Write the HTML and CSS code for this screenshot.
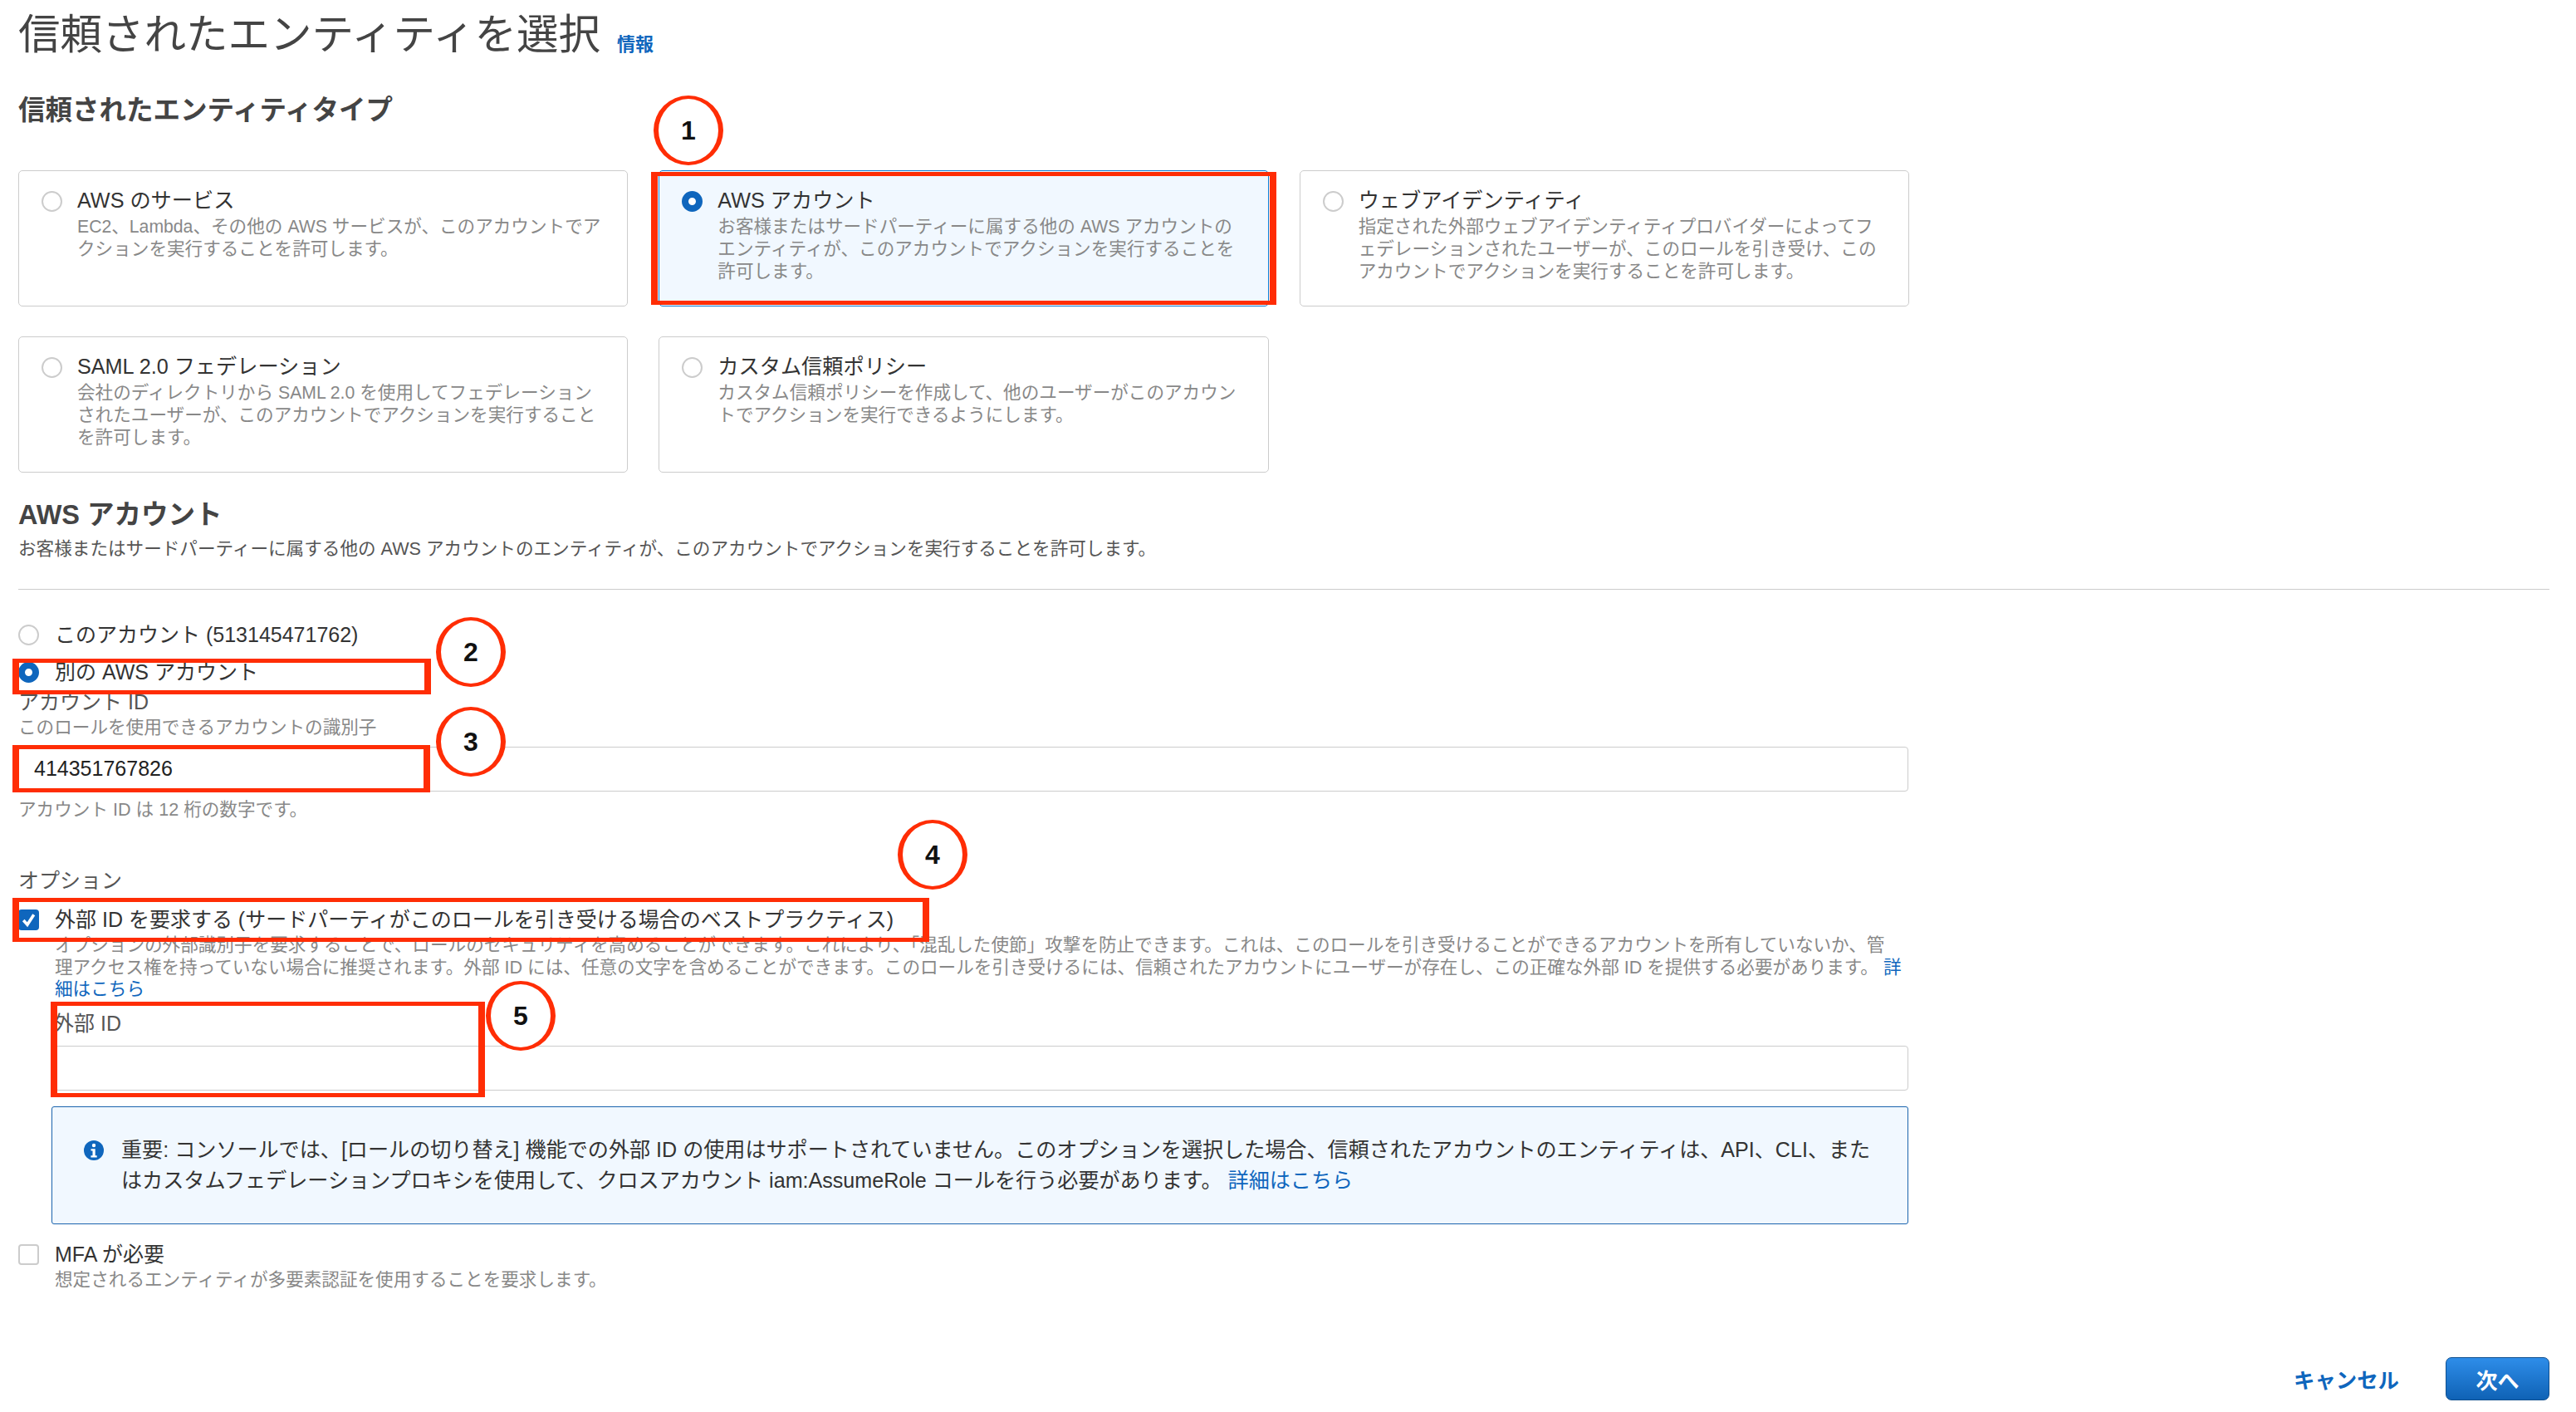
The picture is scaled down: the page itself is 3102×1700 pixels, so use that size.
FILE: index.html
```html
<!DOCTYPE html>
<html lang="ja">
<head>
<meta charset="utf-8">
<title>信頼されたエンティティを選択</title>
<link rel="stylesheet" href="styles.css">
</head>
<body>
<main class="page">
  <header class="title-row">
    <h1 class="title">信頼されたエンティティを選択</h1>
    <a class="info-link">情報</a>
  </header>
  <h2 class="section-title">信頼されたエンティティタイプ</h2>
  <div class="cards">
    <div class="card">
      <span class="radio"></span>
      <div class="card-body"><div class="card-title">AWS のサービス</div><p class="card-desc"><span class="latin">EC2</span>、<span class="latin">Lambda</span>、その他の <span class="latin">AWS</span> サービスが、このアカウントでア<br>クションを実行することを許可します。</p></div>
    </div>
    <div class="card card-on">
      <span class="radio radio-on"></span>
      <div class="card-body"><div class="card-title">AWS アカウント</div><p class="card-desc">お客様またはサードパーティーに属する他の <span class="latin">AWS</span> アカウントの<br>エンティティが、このアカウントでアクションを実行することを<br>許可します。</p></div>
    </div>
    <div class="card">
      <span class="radio"></span>
      <div class="card-body"><div class="card-title">ウェブアイデンティティ</div><p class="card-desc">指定された外部ウェブアイデンティティプロバイダーによってフ<br>ェデレーションされたユーザーが、このロールを引き受け、この<br>アカウントでアクションを実行することを許可します。</p></div>
    </div>
    <div class="card">
      <span class="radio"></span>
      <div class="card-body"><div class="card-title">SAML 2.0 フェデレーション</div><p class="card-desc">会社のディレクトリから <span class="latin">SAML 2.0</span> を使用してフェデレーション<br>されたユーザーが、このアカウントでアクションを実行すること<br>を許可します。</p></div>
    </div>
    <div class="card">
      <span class="radio"></span>
      <div class="card-body"><div class="card-title">カスタム信頼ポリシー</div><p class="card-desc">カスタム信頼ポリシーを作成して、他のユーザーがこのアカウン<br>トでアクションを実行できるようにします。</p></div>
    </div>
  </div>

  <h2 class="section-title account-title">AWS アカウント</h2>
  <p class="account-desc">お客様またはサードパーティーに属する他の AWS アカウントのエンティティが、このアカウントでアクションを実行することを許可します。</p>
  <hr class="rule">

  <div class="choice choice-first"><span class="radio"></span><span class="choice-label">このアカウント (513145471762)</span></div>
  <div class="choice choice-second"><span class="radio radio-on"></span><span class="choice-label">別の AWS アカウント</span></div>

  <div class="label label-account">アカウント ID</div>
  <div class="hint hint-account">このロールを使用できるアカウントの識別子</div>
  <div class="input input-account">414351767826</div>
  <div class="hint hint-help">アカウント ID は 12 桁の数字です。</div>

  <div class="label label-options">オプション</div>
  <div class="choice choice-check">
    <span class="check check-on"><svg viewBox="0 0 24 24" width="25" height="25"><path d="M6 12.5l4.5 5L18 6" fill="none" stroke="#fff" stroke-width="3.4"/></svg></span>
    <span class="choice-label">外部 ID を要求する (サードパーティがこのロールを引き受ける場合のベストプラクティス)</span>
  </div>
  <div class="indent">
    <p class="option-desc">オプションの外部識別子を要求することで、ロールのセキュリティを高めることができます。これにより、「混乱した使節」攻撃を防止できます。これは、このロールを引き受けることができるアカウントを所有していないか、管<br>理アクセス権を持っていない場合に推奨されます。外部 ID には、任意の文字を含めることができます。このロールを引き受けるには、信頼されたアカウントにユーザーが存在し、この正確な外部 ID を提供する必要があります。 <a class="link">詳<br>細はこちら</a></p>
    <div class="label label-external">外部 ID</div>
    <div class="input input-external"></div>
    <div class="alert">
      <svg class="alert-icon" viewBox="0 0 24 24" width="24" height="24"><circle cx="12" cy="12" r="12" fill="#0f66bd"/><circle cx="12" cy="6" r="2.2" fill="#fff"/><path d="M8.5 10.2h5.2v8h2v2.2H8.4v-2.2h2.1v-5.8h-2z" fill="#fff"/></svg>
      <p class="alert-text">重要: コンソールでは、[ロールの切り替え] 機能での外部 ID の使用はサポートされていません。このオプションを選択した場合、信頼されたアカウントのエンティティは、API、CLI、またはカスタムフェデレーションプロキシを使用して、クロスアカウント iam:AssumeRole コールを行う必要があります。 <a class="link">詳細はこちら</a></p>
    </div>
  </div>
  <div class="choice choice-mfa"><span class="check"></span><span class="choice-label">MFA が必要</span></div>
  <div class="hint hint-mfa">想定されるエンティティが多要素認証を使用することを要求します。</div>

  <footer class="footer">
    <a class="cancel">キャンセル</a>
    <button class="next">次へ</button>
  </footer>
</main>

<div class="box box-1"></div>
<div class="box box-2"></div>
<div class="box box-3"></div>
<div class="box box-4"></div>
<div class="box box-5"></div>
<div class="mark mark-1">1</div>
<div class="mark mark-2">2</div>
<div class="mark mark-3">3</div>
<div class="mark mark-4">4</div>
<div class="mark mark-5">5</div>
</body>
</html>
```
FILE: styles.css
```css
* { box-sizing: border-box; }
html, body { margin: 0; padding: 0; background: #fff; }
body {
  position: relative;
  width: 3102px;
  height: 1700px;
  overflow: hidden;
  font-family: "Liberation Sans", "Noto Sans CJK JP", sans-serif;
  color: #444;
}
p, h1, h2 { margin: 0; }
.page { padding: 12px 32px 0 22px; display: flex; flex-direction: column; }

.title-row { display: flex; align-items: flex-end; gap: 20px; height: 60px; }
.title { font-size: 50.5px; line-height: 60px; font-weight: 400; color: #444; }
.info-link { font-size: 22px; line-height: 30px; font-weight: 700; color: #0f66bd; margin-bottom: 3px; }

.section-title { font-size: 32.5px; line-height: 40px; font-weight: 700; color: #444; margin-top: 41px; }

.cards {
  margin-top: 52px;
  width: 2277px;
  display: grid;
  grid-template-columns: repeat(3, 1fr);
  grid-auto-rows: 164px;
  gap: 36px 37px;
}
.card { display: flex; gap: 18px; padding: 20px 20px 0 27px; border: 1.5px solid #ccc; border-radius: 5px; background: #fff; }
.card > .radio { margin-top: 4px; }
.card-on { background: #f1f8ff; border-color: #0f7ad0; }
.card-body { flex: 1; min-width: 0; }
.card-title { font-size: 25.2px; line-height: 30px; color: #333; }
.card-desc { font-size: 21.6px; line-height: 27px; color: #888; margin-top: 3px; white-space: nowrap; }
.latin { font-size: 21.2px; }

.radio { flex: none; display: block; width: 25px; height: 25px; border: 2.5px solid #ccc; border-radius: 50%; background: #fff; }
.radio-on { border: 8px solid #0f66bd; }

.account-title { margin-top: 31px; }
.account-desc { font-size: 21.6px; line-height: 30px; color: #555; margin-top: 6px; }
.rule { width: 100%; margin: 33px 0 0; border: 0; border-top: 1.5px solid #ccc; }

.choice { display: flex; align-items: center; gap: 19px; height: 30px; }
.choice-first { margin-top: 39px; }
.choice-second { margin-top: 15px; }
.choice-label { font-size: 25px; line-height: 30px; color: #333; }

.label { font-size: 25px; line-height: 30px; color: #555; }
.hint { font-size: 21.6px; line-height: 30px; color: #888; }
.label-account { margin-top: 6px; }
.hint-account { margin-top: 1px; }
.input { width: 100%; height: 54px; border: 1.5px solid #ccc; border-radius: 4px; background: #fff; padding-left: 18px; font-size: 25px; line-height: 50px; color: #222; }
.input-account { margin-top: 8px; width: 2276px; }
.hint-help { margin-top: 7px; }
.label-options { margin-top: 55px; }
.choice-check { margin-top: 17px; }

.check { flex: none; display: block; width: 25px; height: 25px; border: 2px solid #ccc; border-radius: 4px; background: #fff; }
.check-on { border: 0; background: #0f66bd; }
.check-on svg { display: block; }

.indent { padding-left: 44px; width: 2276px; }
.option-desc { font-size: 21.6px; line-height: 26.5px; color: #888; margin-top: 3px; white-space: nowrap; }
.link { color: #0f66bd; }
.label-external { margin-top: 12.5px; margin-left: -2px; }
.input-external { margin-top: 12px; }
.alert {
  display: flex;
  gap: 21px;
  margin: 19px 0 0 -4px;
  height: 142px;
  padding: 40px 24px 0 38px;
  background: #f1f8ff;
  border: 1.5px solid #1a63ad;
  border-radius: 3px;
}
.alert-icon { flex: none; display: block; }
.alert-text { font-size: 25.1px; line-height: 37px; color: #333; margin-top: -7px; }
.choice-mfa { margin-top: 21px; }
.hint-mfa { margin-top: 1px; padding-left: 44px; }

.footer { display: flex; justify-content: flex-end; align-items: center; gap: 56px; margin-top: 78px; }
.cancel { font-size: 25.4px; font-weight: 700; color: #0f66bd; }
.next {
  width: 125px;
  height: 52px;
  border: 1.5px solid #0f4f8f;
  border-radius: 7px;
  background: linear-gradient(#2e8de9, #0f62b5);
  color: #fff;
  font: 700 26px "Liberation Sans", "Noto Sans CJK JP", sans-serif;
}

.box { position: absolute; border-style: solid; border-color: #ff2d05; border-width: 5px 8px; }
.box-1 { left: 784px; top: 207px; width: 753px; height: 160px; }
.box-2 { left: 15px; top: 793px; width: 504px; height: 43px; }
.box-3 { left: 15px; top: 897px; width: 503px; height: 57px; }
.box-4 { left: 15px; top: 1081px; width: 1104px; height: 53px; }
.box-5 { left: 61px; top: 1206px; width: 523px; height: 115px; }

.mark {
  position: absolute;
  width: 84px;
  height: 84px;
  border-style: solid;
  border-color: #ff2d05;
  border-width: 4px 6px;
  border-radius: 50%;
  background: #fff;
  color: #111;
  font: 700 32px/76px "Liberation Sans", sans-serif;
  text-align: center;
}
.mark-1 { left: 787px; top: 115px; }
.mark-2 { left: 525px; top: 743px; }
.mark-3 { left: 525px; top: 851px; }
.mark-4 { left: 1081px; top: 987px; }
.mark-5 { left: 585px; top: 1181px; }
```
